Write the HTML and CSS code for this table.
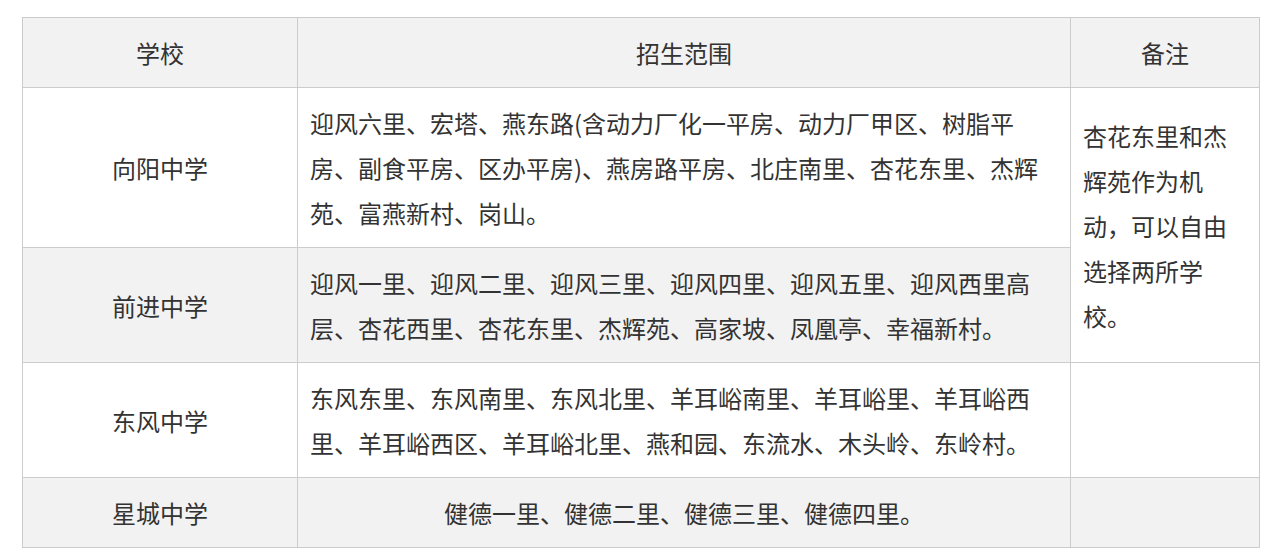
FILE: index.html
```html
<!DOCTYPE html>
<html lang="zh-CN">
<head>
<meta charset="utf-8">
<title>招生范围</title>
<link rel="stylesheet" href="styles.css">
</head>
<body>
<div class="page">
  <table class="zones">
    <colgroup>
      <col class="c-school">
      <col class="c-range">
      <col class="c-note">
    </colgroup>
    <thead>
      <tr class="shade">
        <th>学校</th>
        <th>招生范围</th>
        <th>备注</th>
      </tr>
    </thead>
    <tbody>
      <tr>
        <td class="center">向阳中学</td>
        <td>迎风六里、宏塔、燕东路(含动力厂化一平房、动力厂甲区、树脂平房、副食平房、区办平房)、燕房路平房、北庄南里、杏花东里、杰辉苑、富燕新村、岗山。</td>
        <td rowspan="2" class="note">杏花东里和杰辉苑作为机动，可以自由选择两所学校。</td>
      </tr>
      <tr class="shade">
        <td class="center">前进中学</td>
        <td>迎风一里、迎风二里、迎风三里、迎风四里、迎风五里、迎风西里高层、杏花西里、杏花东里、杰辉苑、高家坡、凤凰亭、幸福新村。</td>
      </tr>
      <tr>
        <td class="center">东风中学</td>
        <td>东风东里、东风南里、东风北里、羊耳峪南里、羊耳峪里、羊耳峪西里、羊耳峪西区、羊耳峪北里、燕和园、东流水、木头岭、东岭村。</td>
        <td></td>
      </tr>
      <tr class="shade">
        <td class="center">星城中学</td>
        <td class="center">健德一里、健德二里、健德三里、健德四里。</td>
        <td></td>
      </tr>
    </tbody>
  </table>
</div>
</body>
</html>
```

FILE: styles.css
```css
html, body {
  margin: 0;
  padding: 0;
  background: #ffffff;
}

.page {
  padding: 17px 0 0 22px;
}

.zones {
  border-collapse: collapse;
  table-layout: fixed;
  width: 1237px;
  font-family: "Noto Sans CJK SC", "Noto Sans", sans-serif;
  font-size: 24px;
  line-height: 45px;
  color: #333333;
}

.c-school { width: 275px; }
.c-range { width: 773px; }
.c-note { width: 189px; }

.zones th,
.zones td {
  border: 1px solid #cccccc;
  padding: 12px;
  vertical-align: middle;
  text-align: left;
  font-weight: normal;
}

.zones th,
.zones td.center {
  text-align: center;
}

.shade th,
.shade td {
  background: #f2f2f2;
}

.zones td.note {
  background: #ffffff;
}
```
